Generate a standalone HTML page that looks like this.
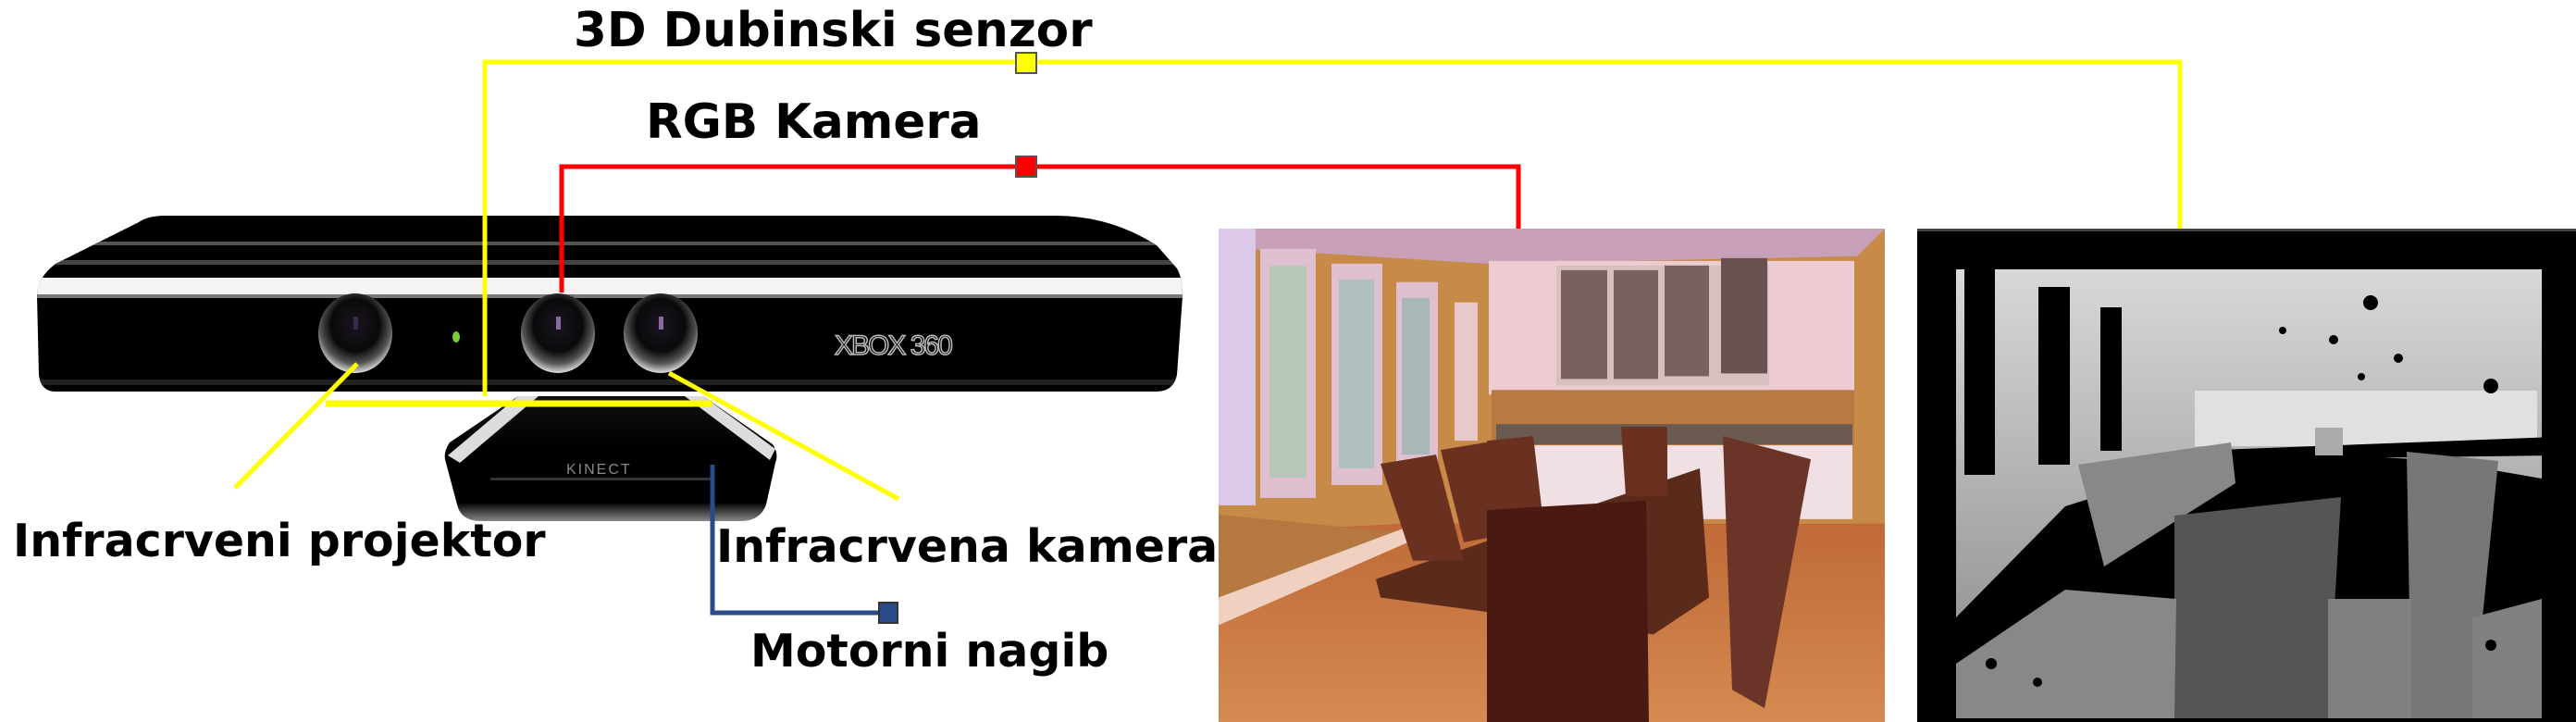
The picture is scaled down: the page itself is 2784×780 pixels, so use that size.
<!DOCTYPE html>
<html><head><meta charset="utf-8"><style>
html,body{margin:0;padding:0;background:#fff;width:2784px;height:780px;overflow:hidden}
text{font-family:"DejaVu Sans","Liberation Sans",sans-serif;font-weight:bold;fill:#000}
</style></head><body>
<svg width="2784" height="780" viewBox="0 0 2784 780" xmlns="http://www.w3.org/2000/svg">
<defs>
<radialGradient id="lens" cx="50%" cy="40%" r="60%">
<stop offset="0" stop-color="#1a1420"/><stop offset="0.55" stop-color="#0a0a0a"/><stop offset="0.8" stop-color="#555"/><stop offset="1" stop-color="#ddd"/>
</radialGradient>
<linearGradient id="base" x1="0" y1="0" x2="0" y2="1">
<stop offset="0" stop-color="#111"/><stop offset="0.4" stop-color="#000"/><stop offset="0.85" stop-color="#000"/><stop offset="1" stop-color="#888"/>
</linearGradient>
<linearGradient id="floor" x1="0" y1="0" x2="0" y2="1">
<stop offset="0" stop-color="#c06a38"/><stop offset="1" stop-color="#d48a50"/>
</linearGradient>
<linearGradient id="dgrad" x1="0" y1="0" x2="0" y2="1">
<stop offset="0" stop-color="#d8d8d8"/><stop offset="1" stop-color="#999"/>
</linearGradient>
<clipPath id="barclip"><path d="M178 233 L1140 233 Q1200 233 1250 265 L1272 290 Q1278 300 1278 320 L1272 405 Q1268 423 1250 423 L60 423 Q44 423 42 405 L40 320 Q40 300 60 285 L150 240 Q160 233 178 233 Z"/></clipPath>
</defs>

<!-- Kinect bar -->
<g clip-path="url(#barclip)">
<rect x="0" y="225" width="1300" height="210" fill="#000"/>
<rect x="30" y="261" width="1260" height="4" fill="#555"/>
<rect x="30" y="281" width="1260" height="5" fill="#444"/>
<rect x="30" y="300" width="1260" height="18" fill="#f4f4f4"/>
<rect x="30" y="318" width="1260" height="4" fill="#777"/>
<rect x="30" y="410" width="1260" height="6" fill="#222"/>
</g>
<ellipse cx="384" cy="360" rx="40" ry="43" fill="url(#lens)"/>
<ellipse cx="603" cy="360" rx="40" ry="43" fill="url(#lens)"/>
<ellipse cx="714" cy="360" rx="40" ry="43" fill="url(#lens)"/>
<rect x="382" y="342" width="5" height="14" fill="#3a2a4a"/>
<rect x="601" y="342" width="5" height="14" fill="#8a6a9a"/>
<rect x="712" y="342" width="5" height="14" fill="#8a6a9a"/>
<ellipse cx="493" cy="364" rx="4" ry="6" fill="#7acc30"/>
<text x="902" y="383" style="font-family:'Liberation Sans',sans-serif;font-weight:normal;font-size:30px;fill:#000;stroke:#bbb;stroke-width:1.5;letter-spacing:-2px">XBOX 360</text>

<!-- Base -->
<path d="M560 428 L760 428 L835 480 Q842 490 838 500 L828 545 Q822 563 800 563 L520 563 Q498 563 494 545 L482 500 Q478 490 486 478 Z" fill="url(#base)"/>
<path d="M560 428 L582 428 L497 500 L484 492 Z" fill="#ddd"/>
<path d="M740 428 L760 428 L838 485 L832 497 Z" fill="#ddd"/>
<rect x="530" y="516" width="240" height="3" fill="#333"/>
<text x="612" y="512" style="font-family:'Liberation Sans',sans-serif;font-weight:normal;font-size:16px;fill:#888;letter-spacing:2px">KINECT</text>

<!-- Lines -->
<g fill="none" stroke-width="5">
<polyline points="524,428 524,67 2356,67 2356,249" stroke="#ffff00"/>
<polyline points="352,436 770,436" stroke="#ffff00" stroke-width="7"/>
<polyline points="386,393 254,527" stroke="#ffff00"/>
<polyline points="723,403 971,539" stroke="#ffff00"/>
<polyline points="607,316 607,180 1641,180 1641,247" stroke="#ff0000"/>
<polyline points="770,502 770,662 960,662" stroke="#2a4a8a"/>
</g>
<rect x="1098" y="57" width="22" height="22" fill="#ffff00" stroke="#555" stroke-width="2"/>
<rect x="1098" y="169" width="22" height="22" fill="#ff0000" stroke="#555" stroke-width="2"/>
<rect x="950" y="651" width="20" height="22" fill="#2a4a8a" stroke="#333" stroke-width="2"/>

<!-- Labels -->
<text x="620" y="50" font-size="51.5">3D Dubinski senzor</text>
<text x="698" y="149" font-size="51.5">RGB Kamera</text>
<text x="14" y="601" font-size="49">Infracrveni projektor</text>
<text x="774" y="607" font-size="49">Infracrvena kamera</text>
<text x="811" y="720" font-size="49">Motorni nagib</text>

<!-- RGB photo -->
<svg x="1317" y="247" width="720" height="533" viewBox="0 0 720 535" preserveAspectRatio="none">
<rect width="720" height="535" fill="#c88a48"/>
<polygon points="0,0 720,0 690,30 290,38 0,20" fill="#c8a0b8"/>
<rect x="0" y="0" width="40" height="300" fill="#dcc8e8"/>
<rect x="45" y="22" width="60" height="270" fill="#e0c0d0"/><rect x="55" y="40" width="40" height="230" fill="#b8c8b8"/>
<rect x="122" y="38" width="55" height="240" fill="#e0c0d0"/><rect x="130" y="55" width="38" height="205" fill="#b0c0c0"/>
<rect x="192" y="58" width="45" height="200" fill="#e0c0d0"/><rect x="198" y="75" width="30" height="170" fill="#a8b8b8"/>
<rect x="255" y="80" width="25" height="150" fill="#e8c8c8"/>
<rect x="292" y="35" width="395" height="145" fill="#ecccd0"/>
<rect x="365" y="40" width="230" height="130" fill="#d8c0c0"/>
<rect x="370" y="45" width="50" height="118" fill="#7a6060"/><rect x="427" y="45" width="48" height="118" fill="#7a6060"/>
<rect x="482" y="40" width="48" height="120" fill="#7a6060"/><rect x="543" y="32" width="50" height="125" fill="#6a5050"/>
<rect x="295" y="175" width="392" height="60" fill="#b87a40"/>
<rect x="300" y="212" width="385" height="22" fill="#6a5a50"/>
<rect x="300" y="235" width="385" height="80" fill="#f0e0e4"/>
<polygon points="0,330 200,320 720,320 720,535 0,535" fill="url(#floor)"/>
<polygon points="0,310 200,330 0,420" fill="#b47840"/>
<polygon points="0,400 200,325 205,340 0,430" fill="#f0d0c0"/>
<polygon points="170,380 520,260 530,400 470,440 175,400" fill="#5a2a1a"/>
<polygon points="175,255 235,245 265,360 210,360" fill="#6a3020"/>
<polygon points="240,240 300,230 320,330 265,340" fill="#6a3020"/>
<polygon points="290,230 340,225 350,310 305,310" fill="#6a3020"/>
<polygon points="435,215 485,215 485,290 440,290" fill="#6a3020"/>
<polygon points="545,225 640,250 590,520 555,500" fill="#6a3428"/>
<polygon points="290,305 462,295 465,535 290,535" fill="#4a1a12"/>
</svg>

<!-- Depth image -->
<svg x="2072" y="247" width="712" height="533" viewBox="0 0 712 533" preserveAspectRatio="none">
<rect width="712" height="533" fill="#000"/>
<rect x="0" y="0" width="712" height="3" fill="#444"/>
<polygon points="42,44 675,44 675,270 560,250 350,240 160,300 42,420" fill="url(#dgrad)"/>
<rect x="300" y="175" width="370" height="60" fill="#e0e0e0"/>
<rect x="51" y="44" width="33" height="222" fill="#000"/>
<rect x="131" y="63" width="34" height="192" fill="#000"/>
<rect x="198" y="85" width="23" height="155" fill="#000"/>
<polygon points="300,240 690,225 690,245 300,250" fill="#000"/>
<rect x="430" y="215" width="30" height="30" fill="#aaa"/>
<polygon points="174,255 339,231 344,275 202,365" fill="#888"/>
<polygon points="278,310 458,290 444,529 278,529" fill="#555"/>
<polygon points="529,241 628,251 600,529 534,529" fill="#777"/>
<polygon points="42,470 160,390 280,400 278,529 42,529" fill="#888"/>
<polygon points="444,400 534,400 534,529 444,529" fill="#808080"/>
<polygon points="600,420 675,400 675,529 600,529" fill="#808080"/>
<g fill="#000">
<circle cx="490" cy="80" r="8"/><circle cx="395" cy="110" r="4"/><circle cx="450" cy="120" r="5"/><circle cx="520" cy="140" r="5"/><circle cx="480" cy="160" r="4"/><circle cx="620" cy="170" r="8"/><circle cx="80" cy="470" r="6"/><circle cx="130" cy="490" r="5"/><circle cx="620" cy="450" r="6"/>
</g>
</svg>
</svg>
</body></html>
